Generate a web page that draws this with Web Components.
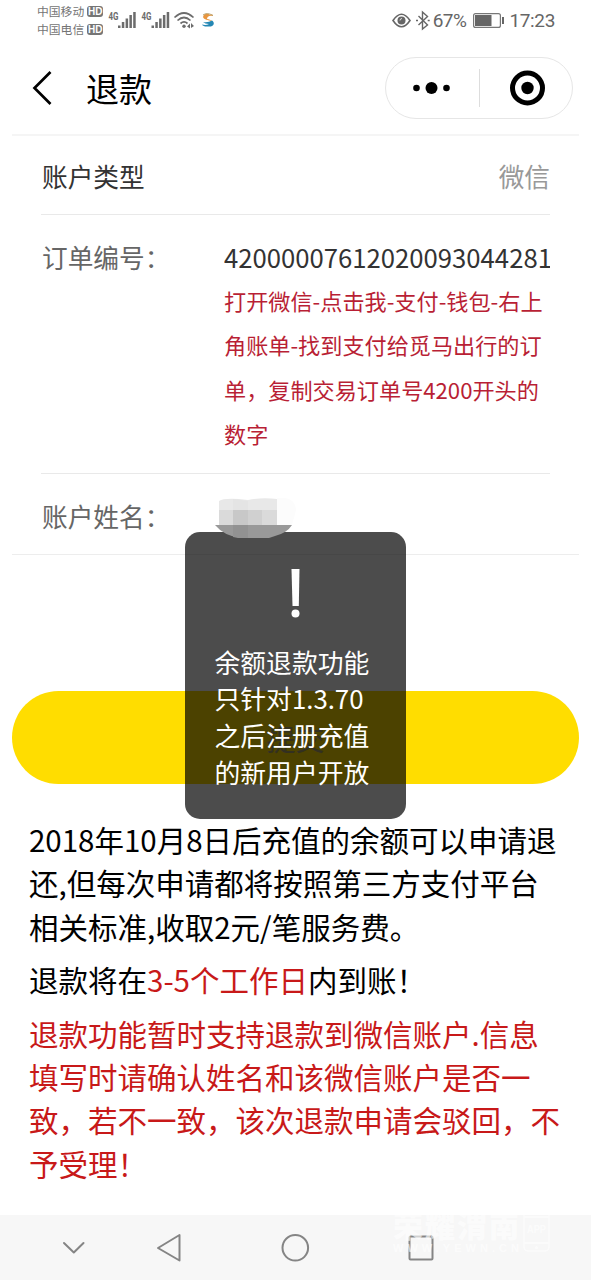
<!DOCTYPE html>
<html lang="zh-CN">
<head>
<meta charset="utf-8">
<title>退款</title>
<style>
html,body{margin:0;background:#fff}
body{width:591px;height:1280px;overflow:hidden;font-family:"Noto Sans CJK SC",sans-serif}
</style>
</head>
<body>
<refund-app></refund-app>
<script>
const define = (name, html) => customElements.define(name, class extends HTMLElement {
  constructor() {
    super();
    const t = document.createElement('template');
    t.innerHTML = html;
    this.attachShadow({mode: 'open'}).append(t.content.cloneNode(true));
  }
});

define('status-bar', `
<style>
:host{display:flex;height:42px;box-sizing:border-box;padding:3px 36px 0 37px;color:#757575;justify-content:space-between}
.l,.r{display:flex}
.car{display:grid;grid-template-rows:18px 18px;font-size:11.8px;line-height:18px;margin-top:-1px}
.car div{display:flex;align-items:center;gap:3px;white-space:nowrap}
.hd{font:bold 10px/11px "Liberation Sans",sans-serif;background:#757575;color:#fff;border-radius:3px;width:16px;height:11px;text-align:center}
.r{font:19px/36px Roboto,sans-serif;color:#666;white-space:nowrap}
.g{font-family:Roboto,sans-serif;font-weight:700;font-size:11px}
svg{display:block}
.time{margin-left:5px;letter-spacing:-.35px}
.pct{letter-spacing:-.5px;margin:0 5px 0 3px}
</style>
<div class="l">
 <div class="car"><div>中国移动<span class="hd">HD</span></div><div>中国电信<span class="hd">HD</span></div></div>
 <svg width="115" height="36" viewBox="103 3 115 36" fill="#6c6c6c">
  <text class="g" x="108.500" y="19.500" textLength="10" lengthAdjust="spacingAndGlyphs">4G</text>
  <text class="g" x="141.500" y="19.500" textLength="10" lengthAdjust="spacingAndGlyphs">4G</text>
  <path d="M118 25.500h2.500V28H118zM121.800 22h2.500v6h-2.500zM125.600 18.500h2.500V28h-2.500zM129.400 15h2.500v13h-2.500zM133.200 12h2.500v16h-2.500z"/>
  <path d="M151.500 25.500h2.500V28h-2.500zM155.300 22h2.500v6h-2.500zM159.100 18.500h2.500V28h-2.500zM162.900 15h2.500v13h-2.500zM166.700 12h2.500v16h-2.500z"/>
  <g fill="none" stroke="#6c6c6c" stroke-width="1.700"><path d="M174.500 17.500Q184 8.500 193.500 17.500M177.500 20.500Q184 14.500 190.500 20.500M180.500 23.500Q184 20.300 187.500 23.500"/></g>
  <circle cx="184" cy="26.200" r="1.700"/><path d="M187 26.500l3-3v5zM194 26l-3-3v5z"/>
  <path d="M203 17c1-4 5-4 7-2 2-1 3 0 3 1-4-1-6 1-6 3 2 0 4 1 5 2-4-1-8-1-9-4" fill="#e9963f"/>
  <path d="M203 15q4-3 10 .500" stroke="#b7a06c" fill="none"/>
  <path d="M203 22q5 1 9-1.500c3 2 2 5-1 6h-6q-3-1-3-2 4 1 7-.500-4 0-6-2" fill="#2587b4"/>
 </svg>
</div>
<div class="r">
 <svg width="38" height="36" viewBox="393 3 38 36" fill="none" stroke="#666" stroke-width="1.600">
  <path d="M394 20.500q8.500-12.500 17 0-8.500 12.500-17 0z"/><circle cx="402.500" cy="20.500" r="4" fill="#666" stroke="none"/><path d="M401 20.500q0-2 2-2" stroke="#ddd" stroke-width="1"/>
  <path d="M419.500 16l9 9-5 4V12l5 4.500-9 8.500" stroke-width="1.400"/><path d="M417 20.500h2M428.700 20.500h2"/>
 </svg>
 <span class="pct">67%</span>
 <svg width="33" height="36" viewBox="471 3 33 36"><rect x="473.600" y="13.600" width="26.800" height="13.800" rx="2" fill="none" stroke="#777" stroke-width="1.200"/><path d="M475 15h16.500v11H475zM502 17h2v7h-2z" fill="#666"/></svg>
 <span class="time">17:23</span>
</div>`);

define('nav-header', `
<style>
:host{display:flex;height:92px;margin:0 12px;border-bottom:2px solid #f5f5f5;align-items:center;box-sizing:content-box}
svg{display:block}
.back{margin-left:20px}
h1{font-weight:400;font-size:33px;line-height:50px;margin:0 auto 0 34px;color:#000}
.cap{box-sizing:border-box;width:188px;height:62px;border:1px solid #e6e6e6;border-radius:31px;margin-right:6px}
</style>
<svg class="back" width="20" height="36" fill="none" stroke="#000" stroke-width="2.700"><path d="M18.500 2L2.500 18l16 16"/></svg>
<h1><slot></slot></h1>
<div class="cap"><svg width="186" height="60"><circle cx="30.500" cy="30" r="3.300"/><circle cx="45.500" cy="30" r="6"/><circle cx="60.500" cy="30" r="3.300"/><path d="M93.500 11v38" stroke="#ddd"/><circle cx="141.500" cy="30" r="15" fill="none" stroke="#000" stroke-width="5"/><circle cx="141.500" cy="30" r="6.200"/></svg></div>`);

define('form-row', `
<style>
:host{display:flex;margin:0 41px;border-bottom:1px solid #e9e9e9;font-size:25.700px;line-height:38px;box-sizing:border-box;padding:22px 0 0 1px;color:#666}
.label{width:182px;flex:none;white-space:nowrap}
.v{flex:1;min-width:0;white-space:nowrap;overflow:hidden}
</style>
<div class="label"><slot name="label"></slot></div><div class="v"><slot></slot></div>`);

define('help-note', `
<style>:host{display:block;font-size:22.150px;line-height:44.300px;color:#b91f35}</style><slot></slot>`);

define('submit-button', `
<style>:host{display:flex;height:93px;margin:136px 12px 0;border-radius:47px;background:#fd0;align-items:center;justify-content:center;font-size:29px;color:#aaa06c}</style><slot></slot>`);

define('notice-text', `
<style>:host{display:block;margin:0 20px 10px 29px;font-size:29.500px;line-height:43.400px;white-space:nowrap;color:#000}</style><slot></slot>`);

define('alert-toast', `
<style>
:host{position:absolute;left:184.500px;top:532px;width:221.500px;height:287px;border-radius:15px;background:rgba(0,0,0,.7);color:#fff;box-sizing:border-box;padding:36px 0 0 30px}
svg{display:block;margin:0 0 25.500px 76px}
p{margin:0;font-size:25.800px;line-height:36.700px;white-space:nowrap}
</style>
<svg width="9" height="50" fill="#fff"><path d="M.500 1h8l-.700 37H1.500z"/><circle cx="4.500" cy="45.500" r="4"/></svg>
<p><slot></slot></p>`);

define('name-mask', `
<style>:host{position:absolute;left:210px;top:494px}svg{display:block}</style>
<svg width="88" height="46" viewBox="210 494 88 46">
<path d="M277 498q18-2 19 12l-4 15h-15z" fill="#fcfcfc"/>
<path d="M219 510v-9q6-4 29-1 14-3 29-1v11z" fill="#e8e8e8"/><path d="M233 499l15 2v9h-15z" fill="#e4e4e4"/>
<path d="M219 510h14v15h-14z" fill="#dadada"/><path d="M233 510h15v15h-15z" fill="#c8c8c8"/><path d="M248 510h14v15h-14z" fill="#d0d0d0"/><path d="M262 510h15v15h-15z" fill="#dadada"/>
<path d="M215 525h77q-5 8-17 11l-6 2h-28q-17-2-26-13z" fill="#999"/><path d="M233 525h15v13h-10l-5-1z" fill="#929292"/>
</svg>`);

define('system-nav', `
<style>:host{display:block;height:65px;background:#f7f7f7}svg{display:block}</style>
<svg width="591" height="65" fill="none" stroke="#858585" stroke-width="2" stroke-linejoin="round" stroke-linecap="round">
<path d="M64 28l9.800 9.500L83.500 28M179.500 20v25.500L158 33z"/><circle cx="295.300" cy="32.800" r="12.800"/><rect x="409.500" y="21.500" width="23" height="23" rx="1"/></svg>`);

define('site-watermark', `
<style>
:host{position:absolute;left:393px;top:1208px;width:160px;height:50px;color:#fff;opacity:.62}
svg{display:block;overflow:visible}
.n{font:900 30px "Noto Sans CJK SC",sans-serif}
.u{font:bold 11px "Liberation Sans",sans-serif}
.a{font:bold 10px "Liberation Sans",sans-serif}
</style>
<svg width="160" height="50" fill="#fff"><text class="n" x="0" y="29" textLength="126">荣耀渭南</text><text class="u" x="0" y="44" textLength="126">WWW.YEWN.CN</text>
<rect x="131" y="3" width="25" height="40" rx="4" fill="none" stroke="#fff" stroke-width="1.500"/><path d="M131 8h25v2h-25zM131 34h25v2h-25z"/><circle cx="143.500" cy="39.500" r="1.500"/><text class="a" x="134" y="25" textLength="19" lengthAdjust="spacingAndGlyphs">APP</text></svg>`);

define('refund-app', `
<style>
:host{display:flex;flex-direction:column;position:relative;width:591px;height:1280px;background:#fff;overflow:hidden}
.type{height:79px;color:#333;padding-top:21px}.type .val{text-align:right;color:#999}
.order{height:259px;padding-top:23px}.num{color:#333;overflow:hidden;height:40px}
.name{height:81px;padding-top:23px}
.red{color:#c81919}
.edge{height:1px;margin:-1px 12px 0;background:#ededed}
.first{margin-top:34px}
system-nav{margin-top:auto}
</style>
<status-bar></status-bar>
<nav-header>退款</nav-header>
<form-row class="type"><span slot="label">账户类型</span><div class="val">微信</div></form-row>
<form-row class="order"><span slot="label">订单编号：</span><div class="num">42000007612020093044281</div><help-note>打开微信-点击我-支付-钱包-右上<br>角账单-找到支付给觅马出行的订<br>单，复制交易订单号4200开头的<br>数字</help-note></form-row>
<form-row class="name"><span slot="label">账户姓名：</span></form-row>
<div class="edge"></div>
<submit-button>提交</submit-button>
<notice-text class="first">2018年10月8日后充值的余额可以申请退<br>还,但每次申请都将按照第三方支付平台<br>相关标准,收取2元/笔服务费。</notice-text>
<notice-text>退款将在<span class="red">3-5个工作日</span>内到账！</notice-text>
<notice-text class="red">退款功能暂时支持退款到微信账户.信息<br>填写时请确认姓名和该微信账户是否一<br>致，若不一致，该次退款申请会驳回，不<br>予受理！</notice-text>
<system-nav></system-nav>
<alert-toast>余额退款功能<br>只针对1.3.70<br>之后注册充值<br>的新用户开放</alert-toast>
<name-mask></name-mask>
<site-watermark></site-watermark>`);
</script>
</body>
</html>
